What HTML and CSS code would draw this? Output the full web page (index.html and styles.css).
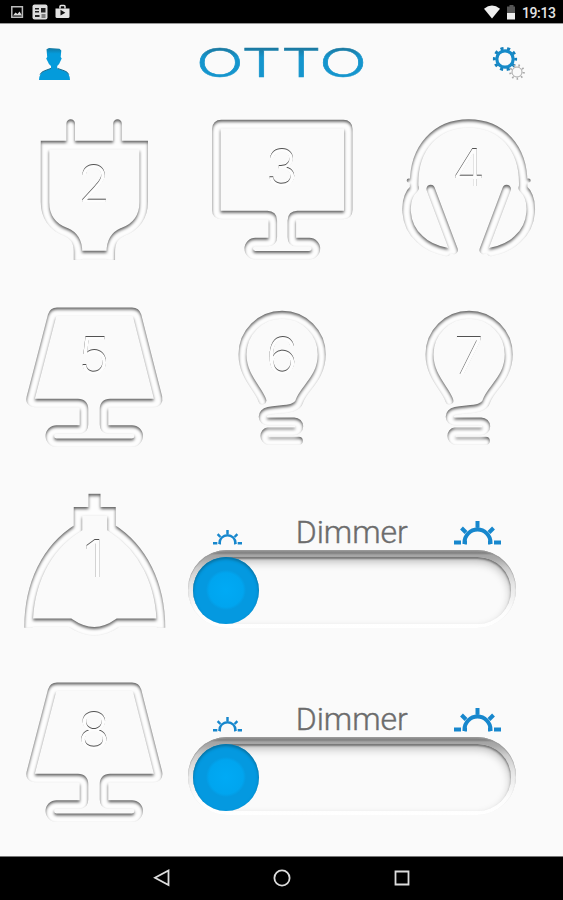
FILE: index.html
```html
<!DOCTYPE html>
<html>
<head>
    <meta charset="utf-8">
    <title>OTTO</title>
    <link rel="stylesheet" href="styles.css">
</head>
<body>
    <div id="screen">
        <div class="status">
            <svg class="status-left" width="80" height="24" viewBox="0 0 80 24">
                <path fill="none" stroke="#bbb" stroke-width="1.5" d="M11.800 6.800h10.600v10.400H11.800z"/>
                <path fill="#ddd" d="M13 15.500l2.500-3 2 1.500 2-2.500 2.500 4z"/>
                <rect x="32.500" y="4.500" width="15" height="15" rx="2" fill="#ddd"/>
                <path fill="#222" d="M35 8h4v1.500h-4zM35 11h4v1.500h-4zM41 8h4.500v4.500H41zM35 15h4.500v2H35zM41.500 14.500h4v1h-4zM41.500 16.500h4v1h-4z"/>
                <path fill="#e4e4e4" d="M55.500 8.500h14v8q0 1.500-1.500 1.500H57q-1.500 0-1.500-1.500z"/>
                <path fill="none" stroke="#e4e4e4" stroke-width="1.500" d="M60 8.500V6.500q0-1 1-1h3q1 0 1 1v2"/>
                <path fill="#111" d="M60.500 9.800v5.700l4.800-2.800z"/>
            </svg>
            <div class="status-right">
                <svg width="34" height="24" viewBox="0 0 34 24">
                    <path fill="#eee" d="M1 8.700Q9 2.500 17 8.700L9 18.500z"/>
                    <path fill="#555" d="M26.500 5h4v1.500h1.500V13h-8V6.500h2.500z"/>
                    <path fill="#eee" d="M24 13h8v6.500h-8z"/>
                </svg>
                <span class="time">19:13</span>
            </div>
        </div>

        <div class="header">
            <svg class="user" width="34" height="34" viewBox="0 0 34 34">
                <defs>
                    <linearGradient id="userFill" x1="0" y1="0" x2="0" y2="1">
                        <stop offset="0" stop-color="#14779f"/>
                        <stop offset=".18" stop-color="#049bdb"/>
                    </linearGradient>
                </defs>
                <path fill="url(#userFill)" d="M9.500 2.200L12 1l10.500.8 1.800 1.800-.6 6.400 1 1.500-1.300 2.700q-.8 2.800-3.200 4.800v2.400l7.500 2.500q5 1.800 5.300 9H2q.3-7.200 5.300-9l6.700-2.500V19q-2.600-2-3.400-4.800L9.200 11.500l1-1.500z"/>
                <path fill="none" stroke="#17688a" d="M14 21.400l-6.700 2.500q-3 1-4.200 3.600M20.500 21.400l7.200 2.500q3 1 4 3.600"/>
            </svg>
            <svg class="logo" width="168" height="36" viewBox="0 0 168 36">
                <defs>
                    <linearGradient id="logoFill" x1="0" y1="0" x2="0" y2="1">
                        <stop offset=".2" stop-color="#1b789f"/>
                        <stop offset=".4" stop-color="#1595cd"/>
                    </linearGradient>
                </defs>
                <text x="-2" y="32.500" textLength="171" lengthAdjust="spacingAndGlyphs">OTTO</text>
            </svg>
            <svg class="gears" width="36" height="36" viewBox="0 0 36 36">
                <circle cx="15" cy="14" r="8.200" fill="none" stroke="#168bc9" stroke-width="3.200"/>
                <circle cx="15" cy="14" r="10.700" fill="none" stroke="#1682bd" stroke-width="2.800" stroke-dasharray="3.100 3.623" stroke-dashoffset="1.550"/>
                <circle cx="27" cy="27" r="5" fill="none" stroke="#aaa" stroke-width="1"/>
                <circle cx="27" cy="27" r="6.700" fill="none" stroke="#aaa" stroke-width="2.200" stroke-dasharray="1.500 3.177"/>
            </svg>
        </div>

        <div class="grid">
            <!-- plug -->
            <div class="cell">
                <svg viewBox="0 97 187.600 187.600">
                    <defs>
                        <!-- inner shadow that makes strokes look pressed in -->
                        <filter id="carve" x="-20%" y="-20%" width="140%" height="140%" color-interpolation-filters="sRGB">
                            <feComponentTransfer in="SourceAlpha" result="inv">
                                <feFuncA type="table" tableValues="1 0"/>
                            </feComponentTransfer>
                            <feGaussianBlur in="inv" stdDeviation="1.700" result="b1"/>
                            <feOffset in="b1" dy="2.100" result="o1"/>
                            <feFlood flood-color="#000" flood-opacity=".62"/>
                            <feComposite in2="o1" operator="in"/>
                            <feComposite in2="SourceAlpha" operator="in" result="s1"/>
                            <feMerge result="m1">
                                <feMergeNode in="SourceGraphic"/>
                                <feMergeNode in="s1"/>
                            </feMerge>
                            <feGaussianBlur in="m1" stdDeviation=".35"/>
                        </filter>
                        <filter id="carveText" x="-20%" y="-20%" width="140%" height="140%" color-interpolation-filters="sRGB">
                            <feComponentTransfer in="SourceAlpha" result="inv">
                                <feFuncA type="table" tableValues="1 0"/>
                            </feComponentTransfer>
                            <feGaussianBlur in="inv" stdDeviation=".7" result="b1"/>
                            <feOffset in="b1" dx=".3" dy=".9" result="o1"/>
                            <feFlood flood-color="#000" flood-opacity=".68"/>
                            <feComposite in2="o1" operator="in"/>
                            <feComposite in2="SourceAlpha" operator="in" result="s1"/>
                            <feMerge result="m1">
                                <feMergeNode in="SourceGraphic"/>
                                <feMergeNode in="s1"/>
                            </feMerge>
                            <feGaussianBlur in="m1" stdDeviation=".3"/>
                        </filter>
                    </defs>
                    <g class="shape butt">
                        <path d="M78 260V252C78 240 73 235 66 232C52 227 45 216 45 202V145H143.700V202C143.700 216 136.600 227 122.600 232C115.600 235 110.800 240 110.800 252V260M78 255H110.800"/>
                        <path class="round" d="M70.700 145V123.500M117.500 145V123.500"/>
                    </g>
                    <text class="digit" x="94" y="202">2</text>
                </svg>
            </div>
            <!-- monitor -->
            <div class="cell">
                <svg viewBox="187.670 97 187.600 187.600">
                    <g class="shape">
                        <path d="M221 124H343q5 0 5 5V210q0 5-5 5H297q-5.500 0-5.500 5.500V237q0 5 4 5H309a6.600 6.600 0 0 1 0 13.200H255a6.600 6.600 0 0 1 0-13.200H268q4.500 0 4.500-5V220.500q0-5.500-5.500-5.500H221q-5 0-5-5V129q0-5 5-5z"/>
                    </g>
                    <text class="digit" x="281.500" y="186.500">3</text>
                </svg>
            </div>
            <!-- headphones -->
            <div class="cell">
                <svg viewBox="375.330 97 187.600 187.600">
                    <g class="shape">
                        <path d="M414.500 187C413 147 437 123.500 469 123.500S525 147 523.500 187"/>
                        <path d="M415 188C403 199 404 225 420 239C427 246 437 250 447 252M523 188C535 199 534 225 518 239C511 246 501 250 491 252"/>
                        <path d="M431 189L454 250M507 189L484 250"/>
                        <path class="nub" d="M409 180.500H413M525 180.500H529"/>
                    </g>
                    <text class="digit" x="469" y="186.500">4</text>
                </svg>
            </div>

            <!-- table lamp -->
            <div class="cell">
                <svg viewBox="0 284.600 187.600 187.600">
                    <g class="shape">
                        <path id="lamp" d="M57 311.400H132q4 0 5.200 4L158 397q1 5.500-4 5.500H110q-6 0-6 6V424q0 5 4 5H132a6.700 6.700 0 0 1 0 13.400H56.500a6.700 6.700 0 0 1 0-13.400H80q4 0 4-5V408.500q0-6-6-6H35q-5.500 0-4.200-5.500L52 315.400q1.200-4 5-4z"/>
                    </g>
                    <text class="digit" x="94" y="374">5</text>
                </svg>
            </div>
            <!-- bulbs -->
            <div class="cell">
                <svg viewBox="187.670 284.600 187.600 187.600">
                    <g class="shape thin">
                        <path id="bulb" d="M262 400C258 388 242.200 376 242.200 354A39.600 39.600 0 0 1 321.400 354C321.400 378 303 388 299 401C296 410 282 408 268 410.500C260.500 412 260.500 421 268 421H294a4.900 4.900 0 0 1 0 9.800H268a4.900 4.900 0 0 0 0 9.600H298.500"/>
                    </g>
                    <text class="digit" x="281.500" y="374">6</text>
                </svg>
            </div>
            <div class="cell">
                <svg viewBox="187.670 284.600 187.600 187.600">
                    <g class="shape thin"><use href="#bulb"/></g>
                    <text class="digit" x="281.500" y="374">7</text>
                </svg>
            </div>

            <!-- pendant lamp + dimmer -->
            <div class="cell">
                <svg viewBox="0 472.200 187.600 187.600">
                    <g class="shape butt">
                        <path d="M28.500 628C28.500 584 46 548 78 528V511.500H111.500V528C143 548 161 584 161 628"/>
                        <path d="M28.500 623H70Q94.500 640 118 623H161"/>
                        <path class="stub" d="M94.500 494V515"/>
                    </g>
                    <text class="digit" x="94" y="577">1</text>
                </svg>
            </div>
            <div class="dimmer">
                <div class="labels">
                    <svg class="sun-small" width="29" height="16" viewBox="0 0 47 25"><use href="#sun"/></svg>
                    <span class="label">Dimmer</span>
                    <svg class="sun-big" width="47" height="25" viewBox="0 0 47 25">
                        <path id="sun" class="sun" d="M0 22.500H7M40 22.500H47M10.500 24V22.500A13 13 0 0 1 36.500 22.500V24M10.500 22.500H13M34 22.500H36.500M23.500 1V7.500M7.500 8L12 12.500M39.500 8L35 12.500"/>
                    </svg>
                </div>
                <div class="track"><div class="groove"><div class="knob"></div></div></div>
            </div>

            <!-- second lamp + dimmer -->
            <div class="cell">
                <svg viewBox="0 284.600 187.600 187.600">
                    <g class="shape"><use href="#lamp"/></g>
                    <text class="digit" x="94" y="374">8</text>
                </svg>
            </div>
            <div class="dimmer">
                <div class="labels">
                    <svg class="sun-small" width="29" height="16" viewBox="0 0 47 25"><use href="#sun"/></svg>
                    <span class="label">Dimmer</span>
                    <svg class="sun-big" width="47" height="25" viewBox="0 0 47 25"><use href="#sun"/></svg>
                </div>
                <div class="track"><div class="groove"><div class="knob"></div></div></div>
            </div>
        </div>

        <div class="navbar">
            <svg width="18" height="20" viewBox="0 0 18 20"><path d="M15.500 2.500V17L2 9.800z"/></svg>
            <svg width="18" height="20" viewBox="0 0 18 20"><circle cx="9" cy="10" r="7.600"/></svg>
            <svg width="18" height="20" viewBox="0 0 18 20"><path d="M2.500 3.500h13v13h-13z"/></svg>
        </div>
    </div>
</body>
</html>
```

FILE: styles.css
```css
html, body {
    margin: 0;
    padding: 0;
}
body {
    font-family: Roboto, "Liberation Sans", sans-serif;
    background-color: #fafafa;
    user-select: none;
}
svg {
    display: block;
}
#screen {
    width: 563px;
    height: 900px;
    display: flex;
    flex-direction: column;
    overflow: hidden;
}

.status {
    height: 23px;
    border-bottom: 1px solid #999;
    background-color: #000;
    display: flex;
    justify-content: space-between;
}
.status-right {
    display: flex;
    padding-right: 8px;
}
.time {
    width: 33px;
    margin-left: 5px;
    font-size: 14px;
    line-height: 26px;
    letter-spacing: -0.4px;
    font-weight: 500;
    color: #e4e4e4;
}

.header {
    height: 73px;
    display: flex;
    align-items: flex-start;
}
.user {
    margin: 23px 0 0 37px;
}
.logo {
    margin: 20px 0 0 127px;
    overflow: visible;
}
.logo text {
    font-family: Inter, sans-serif;
    font-size: 39px;
    font-weight: 300;
    fill: url(#logoFill);
    stroke: url(#logoFill);
    stroke-width: 0.500px;
}
.gears {
    margin: 21px 0 0 124px;
}

.grid {
    display: grid;
    grid-template-columns: repeat(3, 187.67px);
    grid-template-rows: repeat(4, 187.6px);
}
.cell svg {
    width: 187.6px;
    height: 187.6px;
}
.shape {
    fill: none;
    stroke: #fdfdfd;
    stroke-width: 8.500px;
    stroke-linecap: round;
    stroke-linejoin: round;
    filter: url(#carve);
}
.thin {
    stroke-width: 8px;
}
.butt {
    stroke-linecap: butt;
    stroke-linejoin: miter;
}
.round {
    stroke-linecap: round;
}
.nub {
    stroke-width: 4px;
}
.stub {
    stroke-width: 12px;
}
.digit {
    font-family: Inter, sans-serif;
    font-size: 52px;
    font-weight: 300;
    text-anchor: middle;
    fill: #fdfdfd;
    filter: url(#carveText);
}

.dimmer {
    grid-column: span 2;
}
.labels {
    height: 77.500px;
    display: flex;
    align-items: flex-end;
}
.sun {
    fill: none;
    stroke: #1787cd;
    stroke-width: 4px;
}
.sun-small {
    margin: 0 0 5px 25px;
}
.label {
    width: 112px;
    margin-left: 54px;
    font-size: 32px;
    line-height: 35px;
    font-weight: 300;
    color: #6c6c6c;
    -webkit-text-stroke: 0.4px #6c6c6c;
}
.sun-big {
    margin: 0 0 5px 46px;
}
.track {
    width: 328px;
    height: 78px;
    box-sizing: border-box;
    padding: 7px 5px 4px;
    border-radius: 39px;
    background: linear-gradient(#999 0, #808080 3px, #a4a4a4 5px, #aaa 9px, #ccc 18px, #e6e6e6 35px, #fcfcfc 60px, #fff 100%);
    box-shadow: inset 0 1px 1px #999;
}
.groove {
    height: 67px;
    border-radius: 34px;
    background-color: #fafafa;
    box-shadow: inset 0 2px 2px #777, inset 0 5px 9px #bbb;
}
.knob {
    width: 66px;
    height: 67px;
    border-radius: 50%;
    background: radial-gradient(circle at 33px 33px, #00aaf5 0, #00a5ef 17px, #0499e0 20px, #0499e0 100%);
    box-shadow: inset 0 2px 3px #08709f;
}

.navbar {
    height: 44px;
    margin-top: auto;
    padding-bottom: 2px;
    border-top: 1px solid #777;
    box-sizing: border-box;
    background-color: #000;
    display: flex;
    align-items: center;
    justify-content: center;
    gap: 102px;
}
.navbar svg {
    fill: none;
    stroke: #ddd;
    stroke-width: 1.800px;
}
```
